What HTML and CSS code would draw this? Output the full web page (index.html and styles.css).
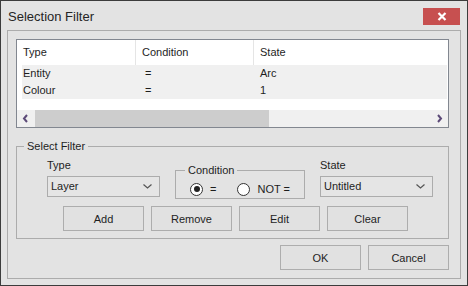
FILE: index.html
```html
<!DOCTYPE html>
<html lang="en">
<head>
  <meta charset="UTF-8" />
  <title>Selection Filter</title>
  <link rel="stylesheet" href="styles.css">
</head>
<body>
  <div class="window">
    <div class="titlebar">
      <span class="title">Selection Filter</span>
      <button class="close" title="Close">
        <svg width="10" height="9" viewBox="0 0 10 9"><path d="M1.5 1 L8.5 8 M8.5 1 L1.5 8" stroke="#fff" stroke-width="2.2"/></svg>
      </button>
    </div>

    <div class="panel">
      <div class="list">
        <div class="list-head">
          <div class="col c1">Type</div>
          <div class="col c2">Condition</div>
          <div class="col c3">State</div>
        </div>
        <div class="rows">
          <div class="row">
            <div class="col c1">Entity</div>
            <div class="col c2 eq">=</div>
            <div class="col c3">Arc</div>
          </div>
          <div class="row">
            <div class="col c1">Colour</div>
            <div class="col c2 eq">=</div>
            <div class="col c3">1</div>
          </div>
        </div>
        <div class="hscroll">
          <span class="arrow">
            <svg width="7" height="9" viewBox="0 0 7 9"><path d="M5 1 L2 4.5 L5 8" stroke="#5c4a78" stroke-width="2" fill="none"/></svg>
          </span>
          <div class="track"><div class="thumb"></div></div>
          <span class="arrow">
            <svg width="7" height="9" viewBox="0 0 7 9"><path d="M2 1 L5 4.5 L2 8" stroke="#5c4a78" stroke-width="2" fill="none"/></svg>
          </span>
        </div>
      </div>

      <fieldset class="group">
        <legend>Select Filter</legend>
        <div class="filter-row">
          <div class="field">
            <label>Type</label>
            <div class="combo">Layer <span class="chev"><svg width="9" height="5" viewBox="0 0 9 5"><path d="M0.5 0.5 L4.5 4 L8.5 0.5" stroke="#555" stroke-width="1.2" fill="none"/></svg></span></div>
          </div>
          <fieldset class="cond">
            <legend>Condition</legend>
            <div class="radios">
              <span class="radio checked"></span><span class="rlabel">=</span>
              <span class="radio second"></span><span class="rlabel">NOT =</span>
            </div>
          </fieldset>
          <div class="field">
            <label>State</label>
            <div class="combo">Untitled <span class="chev"><svg width="9" height="5" viewBox="0 0 9 5"><path d="M0.5 0.5 L4.5 4 L8.5 0.5" stroke="#555" stroke-width="1.2" fill="none"/></svg></span></div>
          </div>
        </div>
        <div class="actions">
          <button class="btn">Add</button>
          <button class="btn">Remove</button>
          <button class="btn">Edit</button>
          <button class="btn">Clear</button>
        </div>
      </fieldset>

      <div class="footer">
        <button class="btn">OK</button>
        <button class="btn">Cancel</button>
      </div>
    </div>
  </div>
</body>
</html>
```

FILE: styles.css
```css
body {
  margin: 0;
  font-family: 'Liberation Sans', Arial, sans-serif;
  font-size: 11px;
  color: #1e1e1e;
}
.window {
  width: 468px;
  height: 286px;
  box-sizing: border-box;
  border: 1px solid #3c3c3c;
  background: #e3e3e3;
}
.titlebar {
  height: 29px;
  display: flex;
  align-items: center;
  justify-content: space-between;
  padding: 0 7px 0 7px;
}
.title {
  font-size: 13px;
  color: #252525;
  margin-top: 1px;
}
.close {
  width: 37px;
  height: 17px;
  margin-top: 2px;
  background: #c75050;
  border: none;
  padding: 0;
  display: flex;
  align-items: center;
  justify-content: center;
}
.panel {
  margin: 0 6px;
  height: 249px;
  box-sizing: border-box;
  border: 1px solid #acacac;
  padding: 8px 8px 6px 8px;
}
.list {
  width: 433px;
  height: 89px;
  box-sizing: border-box;
  border: 1px solid #828790;
  background: #fff;
}
.list-head, .row {
  display: flex;
}
.list-head {
  height: 25px;
  align-items: center;
}
.list-head .col {
  height: 25px;
  line-height: 25px;
}
.list-head .c2, .list-head .c3 {
  border-left: 1px solid #e5e5e5;
}
.col {
  box-sizing: border-box;
  padding-left: 6px;
}
.c1 { width: 118px; }
.c2 { width: 118px; }
.c3 { flex: 1; }
.rows {
  margin: 0 1px 11px 5px;
  background: #f0f0f0;
}
.row {
  height: 17px;
  line-height: 17px;
}
.row .c1 { width: 113px; padding-left: 1px; }
.row .c2 { padding-left: 10px; }
.row .c3 { padding-left: 7px; }
.hscroll {
  height: 17px;
  display: flex;
  background: #f0f0f0;
}
.arrow {
  width: 17px;
  display: flex;
  align-items: center;
  justify-content: center;
}
.track {
  flex: 1;
  padding-left: 1px;
}
.thumb {
  width: 234px;
  height: 17px;
  background: #cdcdcd;
}
fieldset {
  margin: 0;
  padding: 0;
  border: 1px solid #acacac;
  min-width: 0;
}
legend {
  padding: 0 3px;
  line-height: 14px;
}
.group {
  margin-top: 11px;
  width: 433px;
  box-sizing: border-box;
  padding: 5px 0 7px 0;
}
.group > legend {
  margin-left: 7px;
}
.filter-row {
  display: flex;
  gap: 15px;
  padding-left: 30px;
}
.field label {
  display: block;
  line-height: 14px;
  margin-bottom: 4px;
}
.combo {
  width: 113px;
  height: 21px;
  box-sizing: border-box;
  border: 1px solid #acacac;
  background: #e5e5e5;
  padding: 0 7px 0 3px;
  line-height: 19px;
  display: flex;
  justify-content: space-between;
  align-items: center;
}
.chev {
  display: flex;
}
.cond {
  margin-top: 5px;
  width: 130px;
  box-sizing: border-box;
  padding: 4px 0 1px 0;
}
.cond > legend {
  margin-left: 9px;
}
.radios {
  display: flex;
  align-items: center;
  height: 16px;
  padding-left: 14px;
}
.radio {
  width: 13px;
  height: 13px;
  box-sizing: border-box;
  border: 1px solid #333;
  border-radius: 50%;
  background: #fff;
  position: relative;
}
.radio.checked::after {
  content: "";
  position: absolute;
  left: 2.5px;
  top: 2.5px;
  width: 6px;
  height: 6px;
  border-radius: 50%;
  background: #222;
}
.radio.second {
  margin-left: 21px;
}
.rlabel {
  margin-left: 7px;
}
.actions {
  display: flex;
  gap: 7px;
  margin-top: 7px;
  padding-left: 46px;
}
.btn {
  width: 81px;
  height: 25px;
  border: 1px solid #adadad;
  background: #e1e1e1;
  font-family: inherit;
  font-size: 11px;
  color: #1e1e1e;
  padding: 0;
}
.footer {
  display: flex;
  justify-content: flex-end;
  gap: 7px;
  margin-top: 6px;
  padding-right: 3px;
}
```
